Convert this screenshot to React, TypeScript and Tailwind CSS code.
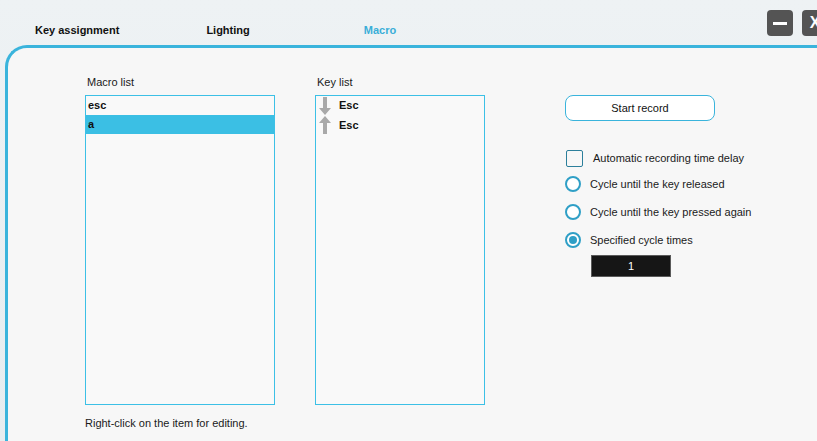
import React from 'react';

const font = { fontFamily: '"Liberation Sans", Arial, sans-serif' };

function Arrow({ up }: { up?: boolean }) {
  return (
    <svg width="12" height="18" viewBox="0 0 12 18" className={up ? '' : 'rotate-180'}>
      <path d="M6 0 L12 7 L8 7 L8 18 L4 18 L4 7 L0 7 Z" fill="#a9a9a9" />
    </svg>
  );
}

function Radio({ checked, label }: { checked?: boolean; label: string }) {
  return (
    <div className="flex items-center h-[20px]">
      <span className="w-[16px] h-[16px] rounded-full border-2 border-[#2f9fc6] bg-white flex items-center justify-center">
        {checked && <span className="w-[8px] h-[8px] rounded-full bg-[#2f9fc6]" />}
      </span>
      <span className="ml-[9px] text-[11px] text-[#1a1a1a]">{label}</span>
    </div>
  );
}

export default function App() {
  return (
    <div
      className="w-[817px] h-[441px] overflow-hidden bg-gradient-to-b from-[#eef2f4] to-[#e6edf0] flex flex-col"
      style={font}
    >
      {/* header */}
      <div className="h-[45px] flex items-start relative">
        <div className="flex items-center pt-[22px] text-[11px] font-bold text-[#111]">
          <span className="ml-[35px]">Key assignment</span>
          <span className="ml-[87px]">Lighting</span>
          <span className="ml-[114px] text-[#3aaed8]">Macro</span>
        </div>
        <div className="absolute top-[10px] left-[767px] flex gap-[9px]">
          <button className="w-[26px] h-[26px] rounded-[4px] bg-[#545454] flex items-center justify-center">
            <span className="w-[14px] h-[3px] bg-white" />
          </button>
          <button className="w-[26px] h-[26px] rounded-[4px] bg-[#545454] text-white font-bold text-[16px] leading-none">
            X
          </button>
        </div>
      </div>

      {/* panel */}
      <div className="flex-1 ml-[5px] border-t-[3px] border-l-[3px] border-[#3ab4dc] rounded-tl-[22px] bg-[#f7f7f7] flex pl-[77px] pt-[26px]">
        <div className="w-[190px] flex flex-col">
          <div className="text-[11px] text-[#1a1a1a] pl-[2px] h-[21px]">Macro list</div>
          <div className="h-[310px] border border-[#3cc0e6] bg-[#f9f9f9] flex flex-col">
            <div className="h-[19px] leading-[19px] px-[2px] text-[11px] font-bold text-[#111]">esc</div>
            <div className="h-[19px] leading-[19px] px-[2px] text-[11px] font-bold text-[#111] bg-[#3bbfe4]">a</div>
          </div>
          <div className="mt-[10px] text-[11px] text-[#1a1a1a] whitespace-nowrap">Right-click on the item for editing.</div>
        </div>

        <div className="w-[170px] ml-[40px] flex flex-col">
          <div className="text-[11px] text-[#1a1a1a] pl-[2px] h-[21px]">Key list</div>
          <div className="h-[310px] border border-[#3cc0e6] bg-[#f9f9f9] flex flex-col">
            <div className="h-[19px] flex items-center pl-[3px] gap-[8px]">
              <Arrow />
              <span className="text-[11px] font-bold text-[#111]">Esc</span>
            </div>
            <div className="h-[20px] flex items-center pl-[3px] gap-[8px]">
              <Arrow up />
              <span className="text-[11px] font-bold text-[#111]">Esc</span>
            </div>
          </div>
        </div>

        <div className="ml-[80px] flex flex-col pt-[21px]">
          <button className="w-[150px] h-[26px] rounded-[8px] border border-[#3ab4dc] bg-white text-[11px] text-[#111] pt-[1px]">
            Start record
          </button>
          <div className="mt-[28px] flex items-center h-[18px] pl-[1px]">
            <span className="w-[17px] h-[17px] rounded-[2px] border border-[#2c7f9b] bg-[#f7f7f7]" />
            <span className="ml-[10px] text-[11px] text-[#1a1a1a]">Automatic recording time delay</span>
          </div>
          <div className="mt-[7px] flex flex-col gap-[8px]">
            <Radio label="Cycle until the key released" />
            <Radio label="Cycle until the key pressed again" />
            <Radio checked label="Specified cycle times" />
          </div>
          <div className="mt-[5px] ml-[26px] w-[80px] h-[22px] bg-[#161616] border border-[#5a5a5a] text-white text-[11px] flex items-center justify-center">
            1
          </div>
        </div>
      </div>
    </div>
  );
}
